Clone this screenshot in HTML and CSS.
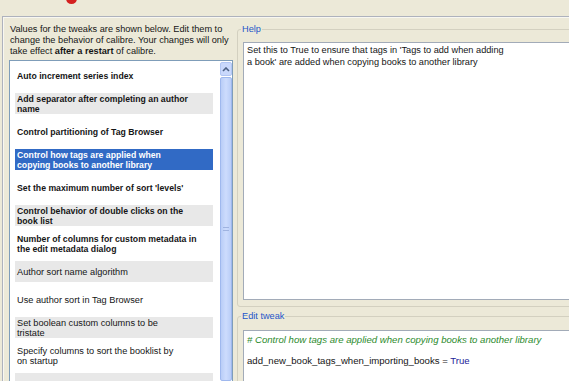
FILE: index.html
```html
<!DOCTYPE html>
<html lang="en">
<head>
  <meta charset="UTF-8" />
  <title>Tweaks</title>
  <link rel="stylesheet" href="styles.css">
</head>
<body>
  <div class="topbar">
    <div class="logo"></div>
  </div>

  <div class="window">
    <div class="left">
      <div class="desc">
        Values for the tweaks are shown below. Edit them to<br>
        change the behavior of calibre. Your changes will only<br>
        take effect <b>after a restart</b> of calibre.
      </div>

      <div class="list">
        <div class="items">
          <div class="item">Auto increment series index</div>
          <div class="item alt">Add separator after completing an author<br>name</div>
          <div class="item">Control partitioning of Tag Browser</div>
          <div class="item sel">Control how tags are applied when<br>copying books to another library</div>
          <div class="item">Set the maximum number of sort 'levels'</div>
          <div class="item alt">Control behavior of double clicks on the<br>book list</div>
          <div class="item">Number of columns for custom metadata in<br>the edit metadata dialog</div>
          <div class="item alt plain">Author sort name algorithm</div>
          <div class="item plain">Use author sort in Tag Browser</div>
          <div class="item alt plain">Set boolean custom columns to be<br>tristate</div>
          <div class="item plain">Specify columns to sort the booklist by<br>on startup</div>
          <div class="item alt plain"></div>
        </div>
        <div class="scroll">
          <div class="scroll-btn">
            <svg width="8" height="5" viewBox="0 0 8 5"><path d="M1 4 L4 1 L7 4" fill="none" stroke="#4d6185" stroke-width="1.6"/></svg>
          </div>
          <div class="thumb"><div class="grip"></div></div>
        </div>
      </div>
    </div>

    <div class="right">
      <fieldset class="group help">
        <legend>Help</legend>
        <div class="box help-box">Set this to True to ensure that tags in 'Tags to add when adding<br>a book' are added when copying books to another library</div>
      </fieldset>

      <fieldset class="group edit">
        <legend>Edit tweak</legend>
        <div class="box code-box">
          <div class="comment"># Control how tags are applied when copying books to another library</div>
          <div class="code">add_new_book_tags_when_importing_books = <span class="kw">True</span></div>
        </div>
      </fieldset>
    </div>
  </div>
</body>
</html>
```

FILE: styles.css
```css
* {
  box-sizing: border-box;
}

html, body {
  margin: 0;
  height: 100%;
  overflow: hidden;
}

body {
  background-color: #ece9d8;
  font-family: "Liberation Sans", Arial, sans-serif;
  font-size: 9.2px;
  color: #151515;
}

.topbar {
  height: 16px;
  position: relative;
}

.logo {
  position: absolute;
  left: 66px;
  top: -7px;
  width: 11px;
  height: 11px;
  border-radius: 50%;
  background-color: #d42020;
}

.window {
  display: flex;
  height: 365px;
  overflow: hidden;
  margin-left: 2px;
  border-top: 1px solid #aeb2bd;
  border-left: 1px solid #aeb2bd;
  box-shadow: inset 1px 1px #f8f7f1;
}

/* left side: description + list */
.left {
  flex: none;
  width: 230px;
  display: flex;
  flex-direction: column;
  padding: 7px 0 0 6px;
}

.desc {
  padding-left: 1px;
  line-height: 11px;
  margin-bottom: 3px;
  white-space: nowrap;
}

.list {
  flex: 1;
  min-height: 0;
  overflow: hidden;
  display: flex;
  width: 224px;
  background-color: #fff;
  border: 1px solid #7f9db9;
  border-bottom: none;
}

.items {
  width: 198px;
  margin: 4px 0 0 5px;
  display: flex;
  flex-direction: column;
  gap: 7px;
}

.item {
  flex: none;
  height: 21px;
  display: flex;
  align-items: center;
  padding-left: 2px;
  line-height: 10px;
  font-size: 8.7px;
  font-weight: bold;
  white-space: nowrap;
}

.item.plain {
  font-weight: normal;
  font-size: 9.2px;
}

.item.alt {
  background-color: #e8e8e8;
}

.item.sel {
  background-color: #316ac5;
  color: #fff;
}

.scroll {
  width: 12px;
  margin: 1px 0 0 7px;
  display: flex;
  flex-direction: column;
}

.scroll-btn {
  height: 14px;
  display: flex;
  align-items: center;
  justify-content: center;
  background-color: #c9d8fc;
  border: 1px solid #b2c6f4;
  border-radius: 2px;
}

.thumb {
  flex: 1;
  margin-top: 1px;
  display: flex;
  align-items: center;
  justify-content: center;
  background: linear-gradient(to right, #b9cdf7, #cddcfd 50%, #b9cdf7);
  border: 1px solid #9fb8ee;
  border-radius: 2px;
}

.grip {
  width: 6px;
  height: 4px;
  border-top: 1px solid #9fb3e0;
  border-bottom: 1px solid #9fb3e0;
}

/* right side: group boxes */
.right {
  flex: none;
  width: 345px;
  padding-left: 4px;
  overflow: hidden;
}

.group {
  margin: 0;
  border: 1px solid #d3d0c0;
  border-radius: 3px;
  padding: 7px 5px 6px 5px;
  min-width: 0;
}

.group legend {
  color: #1f56c9;
  line-height: 11px;
  padding: 0 1px;
  margin-left: -2px;
}

.help {
  margin-top: 7px;
}

.edit {
  margin-top: 4px;
  padding-top: 8px;
}

.box {
  background-color: #fff;
  border: 1px solid #a2abb8;
}

.help-box {
  height: 258px;
  padding: 1px 3px;
  line-height: 12px;
  white-space: nowrap;
}

.code-box {
  height: 51px;
  border-bottom: none;
  padding: 3px 3px;
  line-height: 12px;
  white-space: nowrap;
  font-size: 9.6px;
}

.comment {
  color: #2b8a2b;
  font-style: italic;
  margin-bottom: 9px;
}

.kw {
  color: #24249a;
}
```
